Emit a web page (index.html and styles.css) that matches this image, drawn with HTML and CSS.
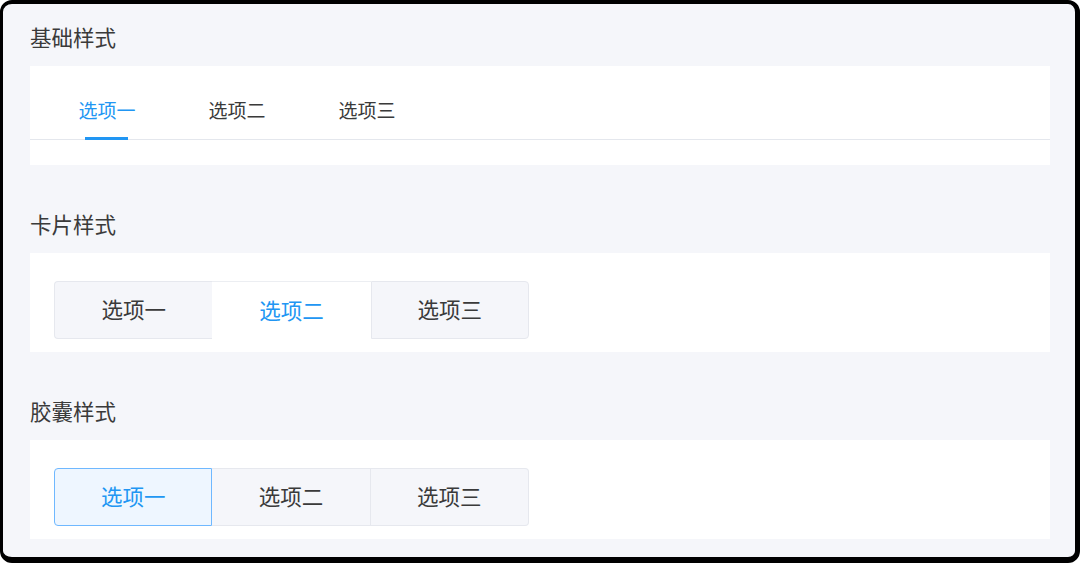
FILE: index.html
```html
<!DOCTYPE html>
<html lang="zh">
<head>
<meta charset="utf-8">
<title>Tabs</title>
<link rel="stylesheet" href="styles.css">
</head>
<body>
<div class="frame">
  <section class="section">
    <h2 class="title">基础样式</h2>
    <div class="panel">
      <div class="line-tabs">
        <div class="line-tab active">选项一</div>
        <div class="line-tab">选项二</div>
        <div class="line-tab">选项三</div>
      </div>
    </div>
  </section>
  <section class="section">
    <h2 class="title">卡片样式</h2>
    <div class="panel panel-pad">
      <div class="card-tabs">
        <div class="card-tab first">选项一</div>
        <div class="card-tab active">选项二</div>
        <div class="card-tab last">选项三</div>
      </div>
    </div>
  </section>
  <section class="section">
    <h2 class="title">胶囊样式</h2>
    <div class="panel panel-pad">
      <div class="pill-tabs">
        <div class="pill-tab first active">选项一</div>
        <div class="pill-tab">选项二</div>
        <div class="pill-tab last">选项三</div>
      </div>
    </div>
  </section>
</div>
</body>
</html>
```
FILE: styles.css
```css
* { box-sizing: border-box; }
html, body { margin: 0; padding: 0; background: #ffffff; }
body {
  font-family: "Noto Sans CJK SC", "Noto Sans", sans-serif;
  color: #3a3a3a;
}
.frame {
  width: 1080px;
  height: 563px;
  border-style: solid;
  border-color: #000000;
  border-width: 4px 5px 6px 3px;
  border-radius: 12px;
  background: #f5f6fa;
  padding: 19px 25px 0 27px;
  display: flex;
  flex-direction: column;
  gap: 45px;
  overflow: hidden;
}
.section { display: flex; flex-direction: column; }
.title {
  margin: 0 0 15px 0;
  font-size: 21.5px;
  font-weight: 400;
  line-height: 28px;
  height: 28px;
  color: #3a3a3a;
}
.panel {
  background: #ffffff;
  height: 99px;
}
.panel-pad { padding: 28px 24px 0 24px; }

/* line tabs */
.line-tabs {
  display: flex;
  padding-left: 12px;
  border-bottom: 1px solid #e4e7ed;
}
.line-tab {
  position: relative;
  width: 130px;
  text-align: center;
  font-size: 19px;
  line-height: 24px;
  padding: 32px 0 17px;
  color: #3a3a3a;
}
.line-tab.active { color: #2196f3; }
.line-tab.active::after {
  content: "";
  position: absolute;
  left: 43px;
  width: 43px;
  bottom: -1px;
  height: 3px;
  background: #2196f3;
}

/* card tabs */
.card-tabs {
  display: grid;
  grid-template-columns: repeat(3, 158.33px);
  height: 58px;
}
.card-tab {
  display: flex;
  align-items: center;
  justify-content: center;
  padding-bottom: 3px;
  font-size: 21.5px;
  color: #3a3a3a;
  background: #f5f6fa;
  border: 1px solid #e6e8ee;
}
.card-tab.first { border-radius: 4px 0 0 4px; border-right: none; }
.card-tab.last { border-radius: 0 4px 4px 0; border-left: 1px solid #e6e8ee; }
.card-tab.active {
  background: #ffffff;
  color: #2196f3;
  border-left: none;
  border-right: none;
  border-bottom: none;
  border-top: 1px solid #eceef2;
}

/* pill tabs */
.pill-tabs {
  display: grid;
  grid-template-columns: repeat(3, 158.33px);
  height: 58px;
}
.pill-tab {
  display: flex;
  align-items: center;
  justify-content: center;
  padding-bottom: 3px;
  font-size: 21.5px;
  color: #3a3a3a;
  background: #f5f6fa;
  border: 1px solid #e6e8ee;
  border-left: none;
}
.pill-tab.first { border-radius: 4px 0 0 4px; border-left: 1px solid #e6e8ee; }
.pill-tab.last { border-radius: 0 4px 4px 0; }
.pill-tab.active {
  background: #eef6ff;
  color: #2196f3;
  border: 1px solid #6fb8ff;
}
```
